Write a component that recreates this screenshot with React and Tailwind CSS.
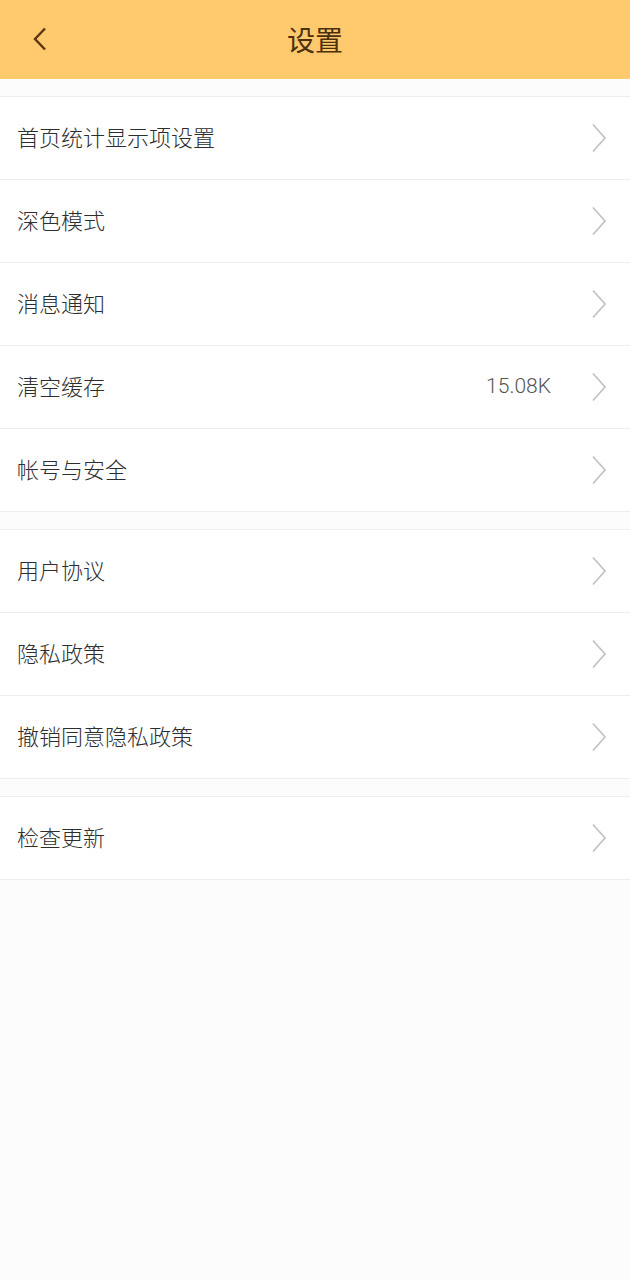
import React from "react";

const font = {
  fontFamily: '"Noto Sans CJK SC", "Noto Sans", Roboto, sans-serif',
};

function Chevron() {
  return (
    <svg width="16" height="30" viewBox="0 0 16 30" className="shrink-0">
      <path d="M2 1.5 L14 15 L2 28.5" fill="none" stroke="#c4c4c4" strokeWidth="1.8" />
    </svg>
  );
}

function Row({ label, value }) {
  return (
    <div className="box-content flex items-center h-[82px] pl-[17px] pr-[23px] bg-white">
      <span className="flex-1 text-[22px] font-light text-[#2e2e2e] pb-[3px]">{label}</span>
      {value && (
        <span className="text-[21px] font-light text-[#555555] mr-[40px]" style={{ fontFamily: "Roboto, sans-serif" }}>
          {value}
        </span>
      )}
      <Chevron />
    </div>
  );
}

function Section({ items }) {
  return (
    <div className="border-y border-[#eeeeee] bg-white divide-y divide-[#eeeeee]">
      {items.map((it) => (
        <Row key={it.label} {...it} />
      ))}
    </div>
  );
}

export default function App() {
  return (
    <div style={font} className="min-h-[1280px] w-[630px] bg-[#fcfcfc]">
      <header className="relative h-[79px] bg-[#ffca6e] flex items-center justify-center">
        <svg width="14" height="24" viewBox="0 0 14 24" className="absolute left-[33px] top-[27px]">
          <path d="M12 1.5 L2 12 L12 22.5" fill="none" stroke="#5a3510" strokeWidth="2.4" />
        </svg>
        <h1 className="text-[28px] text-[#4d300e] leading-none pb-[2px]">设置</h1>
      </header>
      <div className="h-[17px]" />
      <Section
        items={[
          { label: "首页统计显示项设置" },
          { label: "深色模式" },
          { label: "消息通知" },
          { label: "清空缓存", value: "15.08K" },
          { label: "帐号与安全" },
        ]}
      />
      <div className="h-[17px]" />
      <Section
        items={[
          { label: "用户协议" },
          { label: "隐私政策" },
          { label: "撤销同意隐私政策" },
        ]}
      />
      <div className="h-[17px]" />
      <Section items={[{ label: "检查更新" }]} />
    </div>
  );
}
